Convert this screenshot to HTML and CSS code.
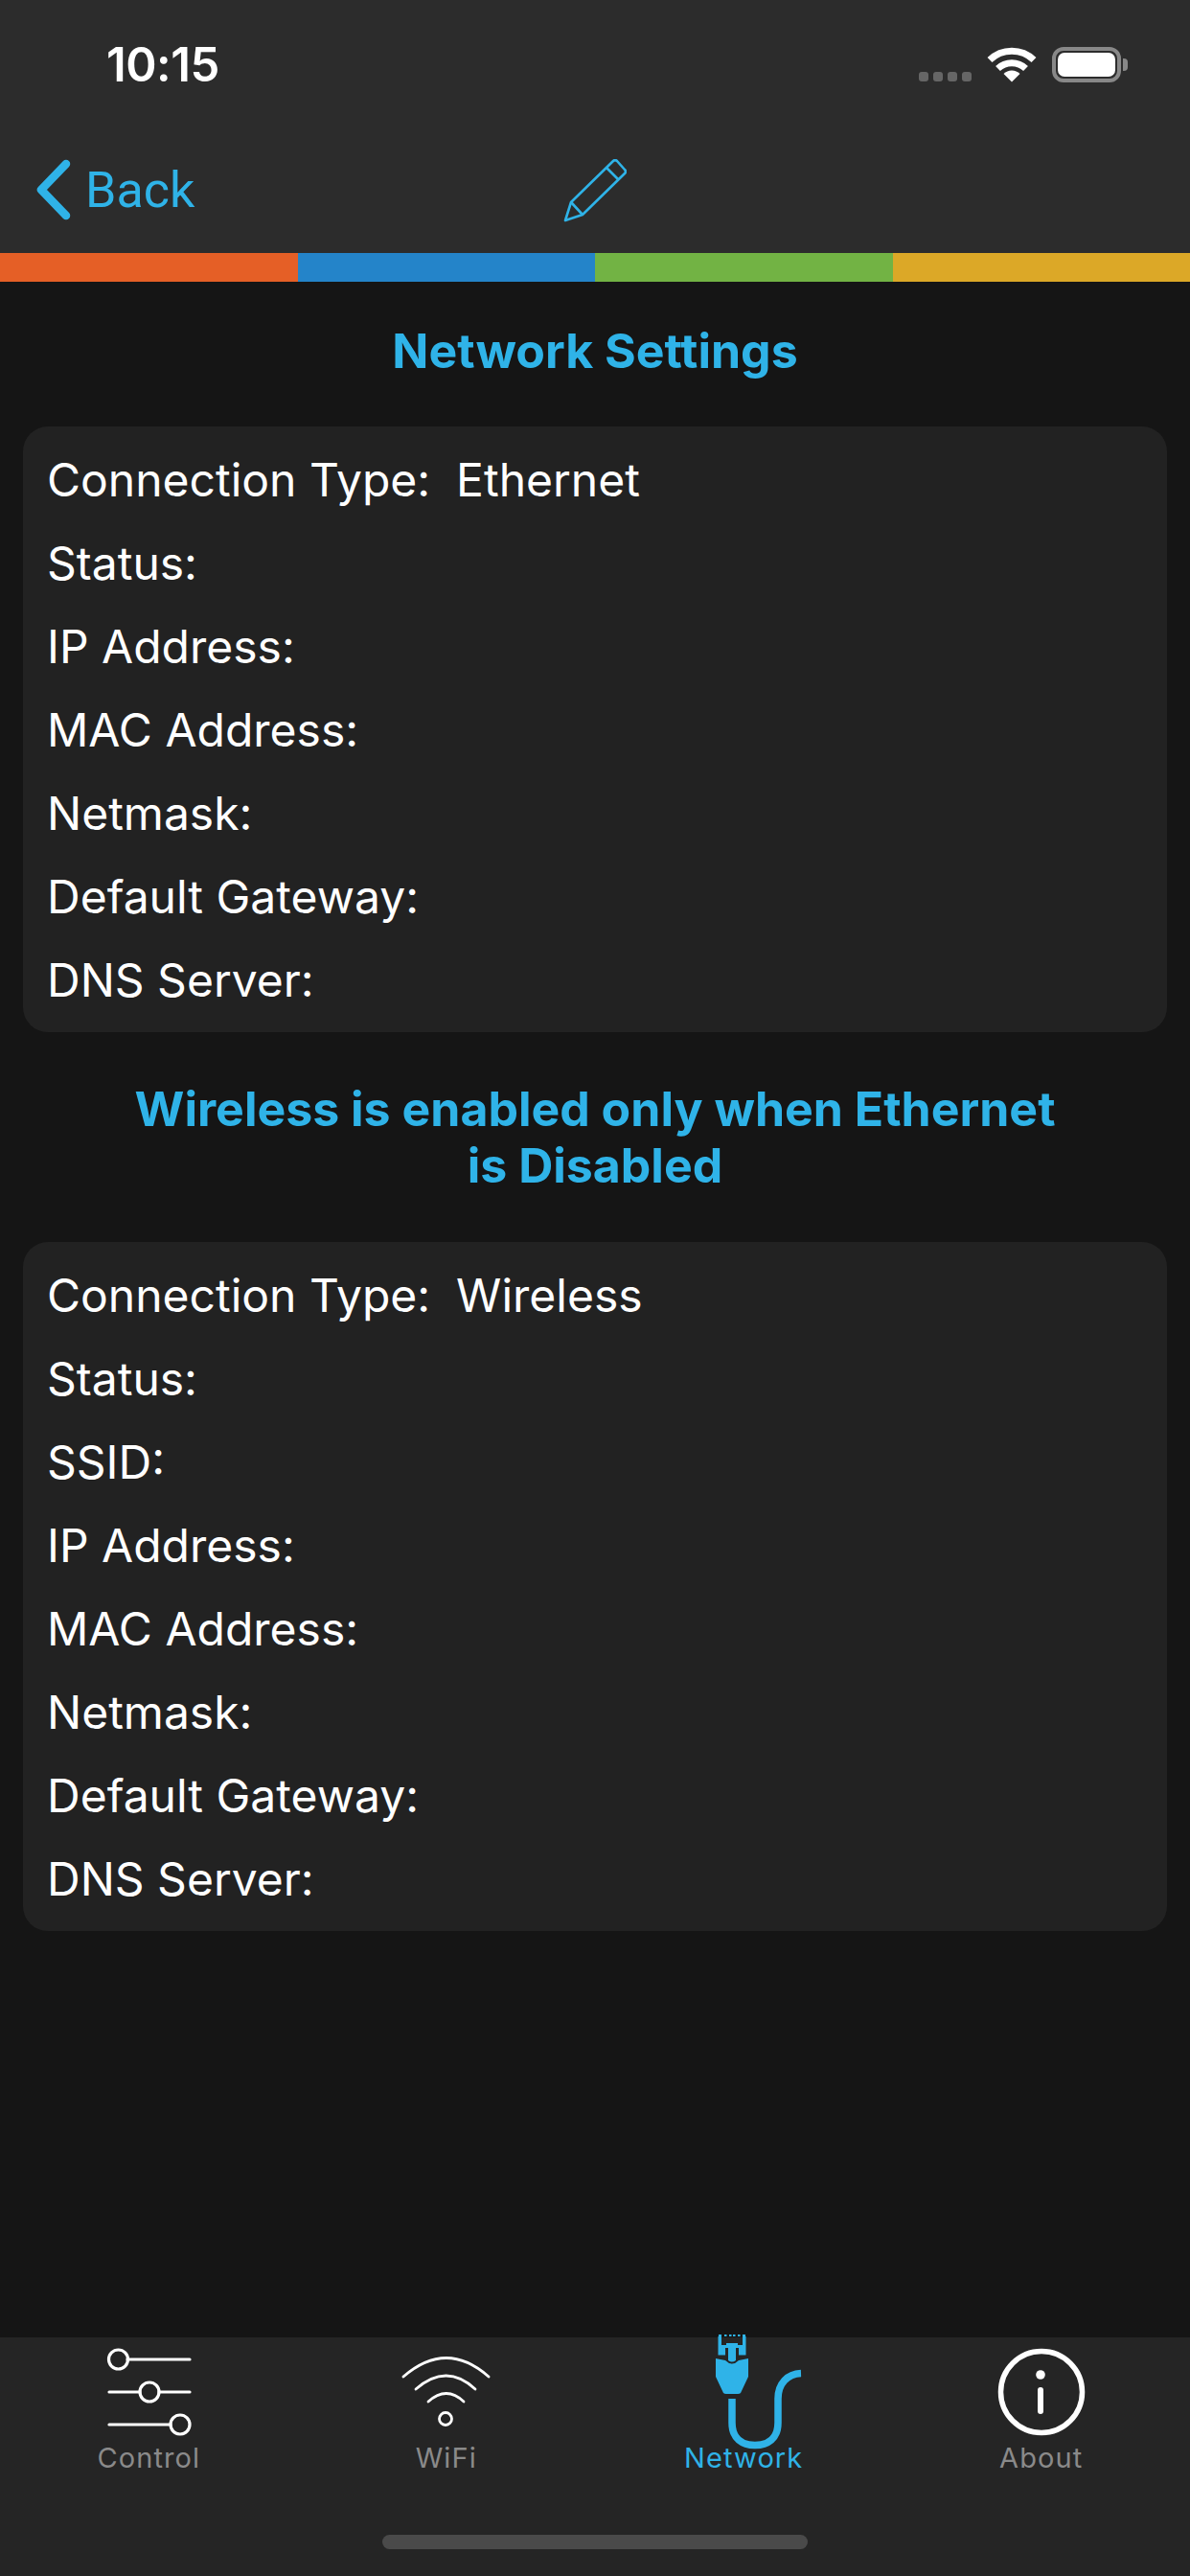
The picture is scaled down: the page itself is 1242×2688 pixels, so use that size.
FILE: index.html
```html
<!DOCTYPE html>
<html lang="en">
<head>
<meta charset="utf-8">
<title>Network Settings</title>
<link rel="stylesheet" href="styles.css">
</head>
<body>
<div class="app">
  <header class="header">
    <div class="status">
      <span class="time">10:15</span>
      <div class="indicators">
        <div class="dots"><i></i><i></i><i></i><i></i></div>
        <svg class="wifi-status" width="54" height="38" viewBox="0 0 54 38">
          <g fill="none" stroke="#fff" stroke-width="7">
            <path d="M4 14.500 A33 33 0 0 1 50 14.500"/>
            <path d="M12.500 23.500 A21 21 0 0 1 41.500 23.500"/>
          </g>
          <path d="M18.500 29 A12 12 0 0 1 35.500 29 L27 37.500 Z" fill="#fff"/>
        </svg>
        <div class="battery"><div class="battery-body"><div class="battery-fill"></div></div><div class="battery-cap"></div></div>
      </div>
    </div>
    <nav class="nav">
      <a class="back">
        <svg class="chevron" width="38" height="64" viewBox="0 0 38 64"><path d="M32 5 L6 32 L32 59" fill="none" stroke="#2fb3e8" stroke-width="8.500" stroke-linecap="round" stroke-linejoin="round"/></svg>
        <span>Back</span>
      </a>
      <svg class="pencil" width="66" height="66" viewBox="589 165 66 66"><g fill="none" stroke="#2fb3e8" stroke-width="2.600" stroke-linejoin="round"><path d="M597 210 L641 167 Q643 165 645 167 L653 176 Q655 178 653 180 L609 223 L591 229 Z"/><path d="M597 210 L609 223"/><path d="M634 174 L646 186"/></g></svg>
    </nav>
  </header>
  <div class="stripes"><div class="orange"></div><div class="blue"></div><div class="green"></div><div class="yellow"></div></div>
  <main class="content">
    <h1 class="title first">Network Settings</h1>
    <section class="card">
      <div class="row">Connection Type:<span class="value">Ethernet</span></div>
      <div class="row">Status:</div>
      <div class="row">IP Address:</div>
      <div class="row">MAC Address:</div>
      <div class="row">Netmask:</div>
      <div class="row">Default Gateway:</div>
      <div class="row">DNS Server:</div>
    </section>
    <h2 class="title second">Wireless is enabled only when Ethernet<br>is Disabled</h2>
    <section class="card">
      <div class="row">Connection Type:<span class="value">Wireless</span></div>
      <div class="row">Status:</div>
      <div class="row">SSID:</div>
      <div class="row">IP Address:</div>
      <div class="row">MAC Address:</div>
      <div class="row">Netmask:</div>
      <div class="row">Default Gateway:</div>
      <div class="row">DNS Server:</div>
    </section>
  </main>
  <footer class="tabbar">
    <div class="tabs">
      <div class="tab">
        <svg class="tab-icon" width="110" height="118" viewBox="100 2436 110 118"><g fill="none" stroke="#fff" stroke-width="3.200" stroke-linecap="round"><path d="M133 2462 H198"/><path d="M114 2496 H146 M166 2496 H198"/><path d="M114 2530 H178"/><circle cx="123.500" cy="2462" r="10"/><circle cx="156" cy="2496" r="10"/><circle cx="188" cy="2530" r="10"/></g></svg>
        <span class="tab-label">Control</span>
      </div>
      <div class="tab">
        <svg class="tab-icon" width="110" height="118" viewBox="411 2436 110 118"><g fill="none" stroke="#fff" stroke-width="2.800" stroke-linecap="round"><path d="M421 2480 Q466 2441 510 2480"/><path d="M434 2493 Q466 2465 496 2493"/><path d="M447 2506 Q466 2489 484 2506"/><circle cx="465" cy="2524" r="6.500"/></g></svg>
        <span class="tab-label">WiFi</span>
      </div>
      <div class="tab active">
        <svg class="tab-icon net" width="110" height="118" viewBox="721 2436 110 118"><g fill="#2fb3e8">
          <path d="M749.500 2438 H753 V2447 H758 V2445 H770 V2447 H775 V2438 H778.500 V2457.500 H771 V2450 H768 V2463 Q764 2466 760 2463 V2450 H757 V2457.500 H749.500 Z"/>
          <path d="M747 2461 L757 2463 Q764 2470 771 2463 L781 2461 V2480 L773 2497 Q772 2498 770 2498 H758 Q756 2498 755 2497 L747 2480 Z"/>
          <rect x="750" y="2436" width="3" height="2"/><rect x="756" y="2436" width="2.500" height="2"/><rect x="761" y="2436" width="2.500" height="2"/><rect x="765" y="2436" width="2.500" height="2"/><rect x="770" y="2436" width="2.500" height="2"/><rect x="775" y="2436" width="3" height="2"/>
        </g><path d="M764 2503 V2528 C764 2545 775 2551.500 788 2551.500 C801 2551.500 812 2545 812 2528 V2503 C812 2487 822 2477 836 2476.500" fill="none" stroke="#2fb3e8" stroke-width="7.500"/></svg>
        <span class="tab-label">Network</span>
      </div>
      <div class="tab">
        <svg class="tab-icon" width="110" height="118" viewBox="1032 2436 110 118"><circle cx="1087" cy="2496" r="42.500" fill="none" stroke="#fff" stroke-width="5.500"/><circle cx="1086" cy="2478" r="4.800" fill="#fff"/><path d="M1086 2494 V2516" stroke="#fff" stroke-width="6" stroke-linecap="round"/></svg>
        <span class="tab-label">About</span>
      </div>
    </div>
    <div class="home-indicator"></div>
  </footer>
</div>
</body>
</html>
```

FILE: styles.css
```css
* { box-sizing: border-box; margin: 0; padding: 0; }
html, body { background: #151515; }
body { font-family: Inter, "Liberation Sans", sans-serif; color: #fff; }
.app { width: 1242px; height: 2688px; display: flex; flex-direction: column; overflow: hidden; }

.header { height: 264px; background: #2c2c2c; display: flex; flex-direction: column; }
.status { height: 134px; display: flex; align-items: center; justify-content: space-between; padding: 0 65px 0 111px; }
.time { font-size: 49px; font-weight: 600; letter-spacing: -0.5px; line-height: 1; }
.indicators { display: flex; align-items: flex-end; height: 38px; }
.dots { display: flex; gap: 5px; margin-right: 15px; margin-bottom: 1px; }
.dots i { display: block; width: 10px; height: 10px; border-radius: 3px; background: #666; }
.wifi-status { margin-right: 15px; display: block; }
.battery { display: flex; align-items: center; height: 38px; }
.battery-body { width: 72px; height: 37px; border: 4px solid #888; border-radius: 12px; padding: 2px; }
.battery-fill { width: 100%; height: 100%; background: #fff; border-radius: 7px; }
.battery-cap { width: 5px; height: 13px; margin-left: 2px; background: #888; border-radius: 0 4px 4px 0; }

.nav { position: relative; height: 130px; display: flex; align-items: center; justify-content: center; }
.back { position: absolute; left: 37px; top: -1px; height: 130px; display: flex; align-items: center; gap: 14px; color: #2fb3e8; font-family: Roboto, Inter, sans-serif; font-weight: 400; font-size: 52px; }
.chevron, .pencil { display: block; }

.stripes { height: 30px; display: grid; grid-template-columns: repeat(4, 1fr); }
.orange { background: #e55f26; }
.blue { background: #2484c9; }
.green { background: #72b344; }
.yellow { background: #dca827; }

.content { flex: 1; padding: 0 24px; }
.title { color: #2fb3e8; text-align: center; font-weight: 700; font-size: 50px; line-height: 59px; }
.title.first { margin-top: 43px; margin-bottom: 49px; }
.title.second { margin-top: 51px; margin-bottom: 50px; }
.card { background: #222; border-radius: 26px; padding: 12px 25px 11px; }
.row { font-size: 48px; line-height: 87px; height: 87px; white-space: nowrap; }
.value { margin-left: 27px; }

.tabbar { height: 249px; background: #252525; display: flex; flex-direction: column; align-items: center; }
.tabs { width: 100%; display: grid; grid-template-columns: repeat(4, 1fr); margin-top: -3px; }
.tab { display: flex; flex-direction: column; align-items: center; color: #8a8a8a; }
.tab.active { color: #2fb3e8; }
.tab-icon { display: block; }
.tab-icon.net { overflow: visible; }
.tab-label { font-size: 29px; line-height: 34px; margin-top: -6px; letter-spacing: 1.1px; }
.home-indicator { width: 444px; height: 15px; border-radius: 8px; background: #4a4a4a; margin-top: 63px; }
```
